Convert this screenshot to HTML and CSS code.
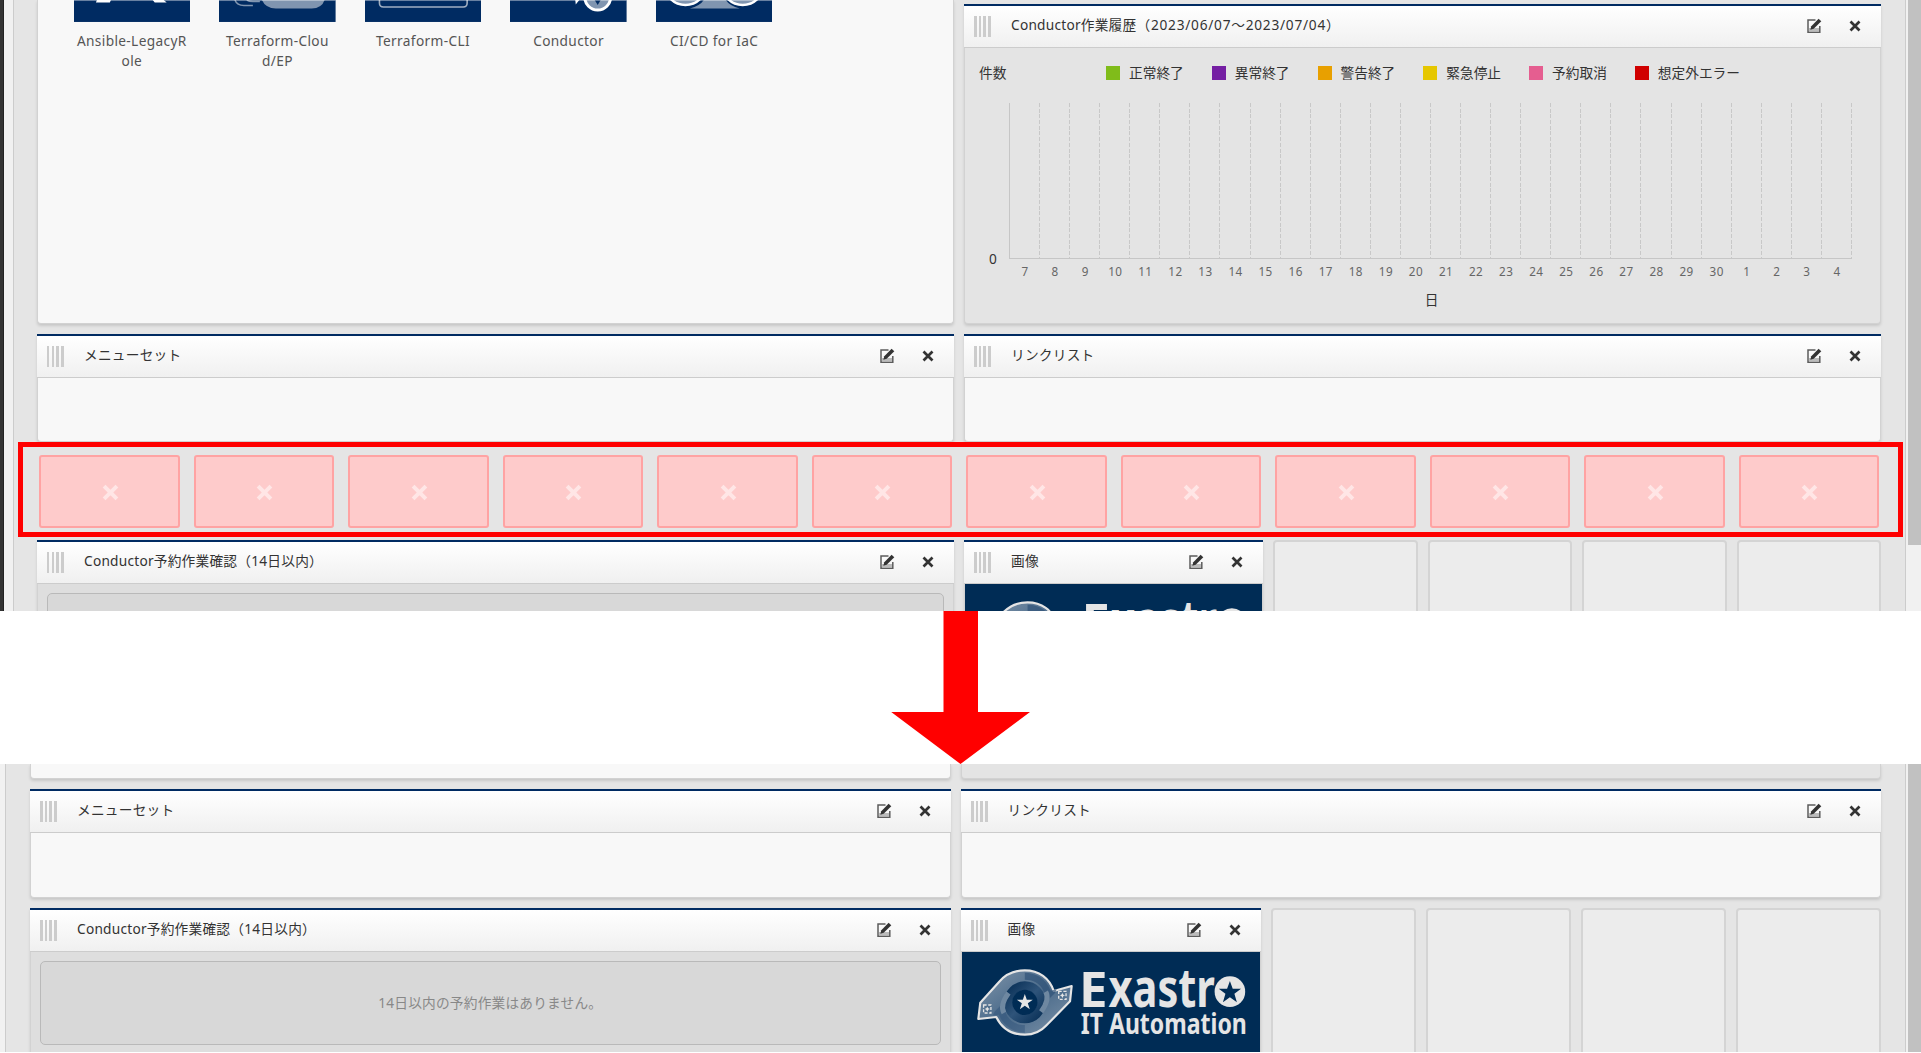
FILE: index.html
```html
<!DOCTYPE html>
<html lang="ja">
<head>
<meta charset="utf-8">
<title>Dashboard</title>
<link rel="stylesheet" href="styles.css">
</head>
<body>
<svg width="0" height="0" class="defs" aria-hidden="true">
  <defs>
    <linearGradient id="band" x1="0" y1="0" x2="1" y2="1">
      <stop offset="0" stop-color="#8196ab"/><stop offset=".5" stop-color="#4a6a8a"/><stop offset="1" stop-color="#7e94aa"/>
    </linearGradient>
    <linearGradient id="ring" x1="0" y1="0" x2="1" y2="1">
      <stop offset="0" stop-color="#0a3158"/><stop offset=".5" stop-color="#2f547a"/><stop offset="1" stop-color="#0a3158"/>
    </linearGradient>
    <symbol id="edit" viewBox="0 0 16 16">
      <path d="M9.5 2H2v12.2h11.8V8" fill="none" stroke="#5c5c5c" stroke-width="1.5"/>
      <path d="M3 10h10v3.5H3z" fill="#bbb"/>
      <path d="M4.3 11.8l1-3.6L12.6.8l2.7 2.5-7.6 7.4z" fill="#333"/>
    </symbol>
    <symbol id="close" viewBox="0 0 12 12">
      <path d="M1.5 1.5l9 9M10.500 1.5l-9 9" stroke="#333" stroke-width="2.7" fill="none"/>
    </symbol>
    <symbol id="cross" viewBox="0 0 18 18">
      <path d="M2.200 2.200l13.600 13.600M15.800 2.200L2.200 15.800" stroke="#ffe6e6" stroke-width="4.200" fill="none"/>
    </symbol>
    <symbol id="logo" viewBox="33 36 897 300" preserveAspectRatio="none">
      <rect x="33" y="36" width="897" height="300" fill="#002c55"/>
      <path d="M88 188L145 125Q175 91 222 91C265 91 296 115 309 153L363 138L358 184L288 255Q262 284 222 284C180 284 151 262 136 231L82 237Z" fill="url(#band)" stroke="#e5e5e5" stroke-width="6.500" stroke-linejoin="round"/>
      <path d="M222 119C270 119 294 160 276 196L312 160L318 148L300 152C284 112 252 98 222 98Z" fill="#2c5077" opacity=".65"/>
      <path d="M222 255C174 255 150 214 168 178L132 214L126 226L144 224C160 262 192 278 222 278Z" fill="#2c5077" opacity=".45"/>
      <circle cx="222" cy="187" r="50" fill="none" stroke="url(#ring)" stroke-width="26"/>
      <path d="M271 215Q298 178 285 155" fill="none" stroke="#6f88a1" stroke-width="15"/>
      <path d="M173 159Q146 196 159 219" fill="none" stroke="#6f88a1" stroke-width="15"/>
      <circle cx="222" cy="187" r="38" fill="#002c55"/>
      <path d="M222 162l6 17h18l-15 11 6 18-15-11-15 11 6-18-15-11h18z" fill="#e5e5e5"/>
      <path d="M98 195h22v24H98zM324 154h22v24h-22z" fill="#52718f" stroke="#e5e5e5" stroke-width="4" stroke-dasharray="9 5"/>
      <path d="M109 200l3 5 5 2-5 2-3 6-3-6-5-2 5-2zM335 159l3 5 5 2-5 2-3 6-3-6-5-2 5-2z" fill="#e5e5e5"/>
      <text x="385" y="200" class="logo-name" textLength="86" lengthAdjust="spacingAndGlyphs">E</text>
      <text x="474" y="200" class="logo-name small" textLength="320" lengthAdjust="spacingAndGlyphs">xastr</text>
      <text x="390" y="283" class="logo-sub" textLength="500" lengthAdjust="spacingAndGlyphs">IT Automation</text>
      <circle cx="839" cy="155" r="46" fill="#e5e5e5"/>
      <path d="M839 123l8.500 23h25l-20 15.500 7.500 25-21-15-21 15 7.500-25-20-15.500h25z" fill="#002c55"/>
    </symbol>
  </defs>
</svg>

<section class="screen before">
  <div class="side-dark"></div>
  <div class="side-light"></div>
  <main class="board">
    <article class="card menu-card">
      <ul class="menus">
        <li><svg viewBox="0 0 117 22" class="tile"><rect width="117" height="22" fill="#002b62"/><path d="M23 0h14l-1 2.500H22zM79 0h11l3 2.500H81z" fill="#fff"/><path d="M0 .5h117" stroke="#fff" opacity=".4"/></svg><span>Ansible-LegacyR<br>ole</span></li>
        <li><svg viewBox="0 0 117 22" class="tile"><rect width="117" height="22" fill="#002b62"/><path d="M16 0q2 5.500 9 5.500h9M28 0q2 1.500 6 1.500h7" stroke="#8095b0" stroke-width="1.500" fill="none"/><path d="M43 0q4 8.500 14 8.500h36Q103 8.500 106 0z" fill="#8095b0"/><path d="M0 .5h117" stroke="#fff" opacity=".4"/></svg><span>Terraform-Clou<br>d/EP</span></li>
        <li><svg viewBox="0 0 117 22" class="tile"><rect width="117" height="22" fill="#002b62"/><path d="M14.500 0v3q0 4 4 4h80q4 0 4-4V0" stroke="#a0afc2" stroke-width="1.600" fill="none"/><path d="M0 .5h117" stroke="#fff" opacity=".4"/></svg><span>Terraform-CLI</span></li>
        <li><svg viewBox="0 0 117 22" class="tile"><rect width="117" height="22" fill="#002b62"/><circle cx="88" cy="-3" r="13" fill="#8095b0" stroke="#fff" stroke-width="3"/><path d="M85 0l3 5 3-5z" fill="#002b62"/><path d="M65.500 0h4l-3.500 4.500z" fill="#fff"/><path d="M0 .5h117" stroke="#fff" opacity=".4"/></svg><span>Conductor</span></li>
        <li><svg viewBox="0 0 117 22" class="tile"><rect width="117" height="22" fill="#002b62"/><path d="M48 0h22q4 6 14 8.500H34Q44 6 48 0z" fill="#8095b0"/><circle cx="29.500" cy="-16" r="21" fill="#8095b0" stroke="#fff" stroke-width="2.500"/><circle cx="87" cy="-16" r="21" fill="#8095b0" stroke="#fff" stroke-width="2.500"/><path d="M0 .5h117" stroke="#fff" opacity=".4"/></svg><span>CI/CD for IaC</span></li>
      </ul>
    </article>
    <article class="card chart-card">
      <header class="bar"><i class="grip"></i><h2>Conductor作業履歴<span class="period">（2023/06/07～2023/07/04）</span></h2><svg class="edit"><use href="#edit"/></svg><svg class="close"><use href="#close"/></svg></header>
      <div class="chart">
        <div class="legend"><span class="unit">件数</span>
          <span class="key green">正常終了</span><span class="key purple">異常終了</span><span class="key orange">警告終了</span><span class="key yellow">緊急停止</span><span class="key pink">予約取消</span><span class="key red">想定外エラー</span>
        </div>
        <div class="plot-row"><span class="zero">0</span><div class="plot"><i></i><i></i><i></i><i></i><i></i><i></i><i></i><i></i><i></i><i></i><i></i><i></i><i></i><i></i><i></i><i></i><i></i><i></i><i></i><i></i><i></i><i></i><i></i><i></i><i></i><i></i><i></i><i></i></div></div>
        <div class="days"><span>7</span><span>8</span><span>9</span><span>10</span><span>11</span><span>12</span><span>13</span><span>14</span><span>15</span><span>16</span><span>17</span><span>18</span><span>19</span><span>20</span><span>21</span><span>22</span><span>23</span><span>24</span><span>25</span><span>26</span><span>27</span><span>28</span><span>29</span><span>30</span><span>1</span><span>2</span><span>3</span><span>4</span></div>
        <div class="axis-name">日</div>
      </div>
    </article>

    <article class="card half"><header class="bar"><i class="grip"></i><h2>メニューセット</h2><svg class="edit"><use href="#edit"/></svg><svg class="close"><use href="#close"/></svg></header></article>
    <article class="card half"><header class="bar"><i class="grip"></i><h2>リンクリスト</h2><svg class="edit"><use href="#edit"/></svg><svg class="close"><use href="#close"/></svg></header></article>

    <div class="blank"><svg><use href="#cross"/></svg></div><div class="blank"><svg><use href="#cross"/></svg></div><div class="blank"><svg><use href="#cross"/></svg></div><div class="blank"><svg><use href="#cross"/></svg></div><div class="blank"><svg><use href="#cross"/></svg></div><div class="blank"><svg><use href="#cross"/></svg></div><div class="blank"><svg><use href="#cross"/></svg></div><div class="blank"><svg><use href="#cross"/></svg></div><div class="blank"><svg><use href="#cross"/></svg></div><div class="blank"><svg><use href="#cross"/></svg></div><div class="blank"><svg><use href="#cross"/></svg></div><div class="blank"><svg><use href="#cross"/></svg></div>

    <article class="card half reserve"><header class="bar"><i class="grip"></i><h2>Conductor予約作業確認（14日以内）</h2><svg class="edit"><use href="#edit"/></svg><svg class="close"><use href="#close"/></svg></header><div class="notice"></div></article>
    <article class="card image-card"><header class="bar"><i class="grip"></i><h2>画像</h2><svg class="edit"><use href="#edit"/></svg><svg class="close"><use href="#close"/></svg></header><svg class="logo"><use href="#logo"/></svg></article>
    <div class="slot"></div><div class="slot"></div><div class="slot"></div><div class="slot"></div>
  </main>
  <div class="scroll"><div class="thumb"></div></div>
  <div class="highlight"></div>
</section>

<div class="between"><svg class="arrow" viewBox="0 0 140 153"><path d="M52.500 0h34.500v101H139L69.500 153 .2 101h52.300z" fill="#f00"/></svg></div>

<section class="screen after">
  <div class="side-light"></div>
  <main class="board">
    <article class="card half tail"></article>
    <article class="card half tail gray"></article>
    <article class="card half"><header class="bar"><i class="grip"></i><h2>メニューセット</h2><svg class="edit"><use href="#edit"/></svg><svg class="close"><use href="#close"/></svg></header></article>
    <article class="card half"><header class="bar"><i class="grip"></i><h2>リンクリスト</h2><svg class="edit"><use href="#edit"/></svg><svg class="close"><use href="#close"/></svg></header></article>
    <article class="card half reserve"><header class="bar"><i class="grip"></i><h2>Conductor予約作業確認（14日以内）</h2><svg class="edit"><use href="#edit"/></svg><svg class="close"><use href="#close"/></svg></header><div class="notice">14日以内の予約作業はありません。</div></article>
    <article class="card image-card"><header class="bar"><i class="grip"></i><h2>画像</h2><svg class="edit"><use href="#edit"/></svg><svg class="close"><use href="#close"/></svg></header><svg class="logo"><use href="#logo"/></svg></article>
    <div class="slot"></div><div class="slot"></div><div class="slot"></div><div class="slot"></div>
  </main>
  <div class="scroll"><div class="thumb"></div></div>
</section>
</body>
</html>
```
FILE: styles.css
```css
* { box-sizing: border-box; }
body {
  margin: 0;
  width: 1921px;
  height: 1053px;
  overflow: hidden;
  background: #fff;
  font: 13.7px/20.5px "Noto Sans", "Noto Sans CJK JP", sans-serif;
  color: #333;
}
.defs { display: block; }
.screen { display: flex; position: relative; overflow: hidden; background: #e5e5e5; }
.before { height: 611px; }
.after { height: 288px; }
.side-dark { width: 4px; background: linear-gradient(90deg, #333 3px, #222 3px); }
.side-light { width: 9px; background: #f1f1f1; }
.after .side-light { width: 5px; }

.board {
  flex: 1;
  display: grid;
  grid-template-columns: repeat(12, minmax(0, 1fr));
  grid-template-rows: 324px 108px 78px 180px;
  gap: 10px;
  padding: 0 24px 0 23px;
  border: solid #ccc;
  border-width: 0 1px;
}
.after .board { grid-template-rows: 15px 109px 180px; padding-right: 24px; padding-left: 24px; }

.card {
  grid-column: span 6;
  background: #f8f8f8;
  border: 1px solid #d2d2d2;
  border-top: 0;
  border-radius: 0 0 4px 4px;
  box-shadow: 0 2px 3px rgba(0, 0, 0, .13);
}
.gray { background: #e4e4e4; }
.bar {
  display: flex;
  align-items: center;
  height: 44px;
  margin: 0 -1px;
  padding: 0 20px 1px 10px;
  border-top: 2.500px solid #002b62;
  border-bottom: 1px solid #ccc;
  background: linear-gradient(#fff, #f0f0f0);
}
.grip {
  width: 17px;
  height: 21px;
  margin-right: 20px;
  background: repeating-linear-gradient(90deg, #ccc 0 2.500px, transparent 2.500px 4.670px);
}
h2 { flex: 1; margin: -2px 0 0; font-size: 13.7px; font-weight: 400; line-height: 20px; letter-spacing: .23px; white-space: nowrap; }
.period { letter-spacing: .75px; }
.edit { width: 16px; height: 16px; margin-right: 27px; }
.close { width: 12px; height: 12px; }

.menu-card { overflow: hidden; }
.menus { display: flex; gap: 29px; margin: 0; padding: 0 0 0 35.500px; list-style: none; }
.menus li { width: 116.600px; text-align: center; color: #555; }
.menus span { display: block; margin-top: 8.500px; letter-spacing: .35px; white-space: nowrap; }
.tile { display: block; width: 116.600px; height: 22px; }

.chart-card { margin-top: 4px; background: #e4e4e4; }
.chart { padding: 15px 28px 0 14px; }
.legend { display: flex; align-items: center; height: 20px; }
.unit { width: 127px; }
.key { display: flex; align-items: center; margin-right: 28px; white-space: nowrap; }
.key::before { content: ""; width: 14px; height: 14px; margin-right: 9px; }
.green::before { background: #80bc1a; }
.purple::before { background: #751fa3; }
.orange::before { background: #e8a000; }
.yellow::before { background: #e6c700; }
.pink::before { background: #e55e90; }
.red::before { background: #d00000; }
.plot-row { display: flex; align-items: flex-end; margin-top: 20px; }
.zero { width: 31px; padding-left: 13px; line-height: 20px; margin: 0 0 -10px -1px; text-indent: -2px; }
.plot { flex: 1; height: 156px; display: grid; grid-template-columns: repeat(28, 1fr); border-left: 1px solid #c6c6c6; border-bottom: 1px solid #c6c6c6; }
.plot i { background: repeating-linear-gradient(#c8c8c8 0 4px, transparent 4px 5.700px) right / 1px 100% no-repeat; }
.days { display: grid; grid-template-columns: repeat(28, 1fr); margin: 2px 0 0 31px; text-align: center; font-size: 11.700px; letter-spacing: .4px; color: #666; }
.axis-name { margin: 8px 0 0 32px; text-align: center; }

.blank {
  display: grid;
  place-items: center;
  margin: 3px 2px 2px 2px;
  border: 2px solid #ffa3a3;
  border-radius: 3px;
  background: #fecbcb;
}
.blank svg { width: 17px; height: 17px; margin: 2px 0 0 2px; }
.slot { border: 2px solid #d4d4d4; border-radius: 4px; background: #ececec; }
.reserve { background: #dedede; }
.notice {
  display: grid;
  place-items: center;
  height: 84px;
  margin: 9px;
  border: 1px solid #b9b9b9;
  border-radius: 5px;
  background: #d8d8d8;
  color: #888;
  letter-spacing: .2px;
}
.image-card { grid-column: span 2; }
.logo { display: block; width: 100%; height: 100px; }
.logo-name { font: 700 143px "Noto Sans", sans-serif; fill: #e5e5e5; }
.small { font-size: 160px; }
.logo-sub { font: 700 83px "Noto Sans", sans-serif; fill: #e5e5e5; }

.scroll { width: 15px; padding-left: 2px; background: #f1f1f1; }
.thumb { height: 545px; background: #c1c1c1; }
.highlight { position: absolute; left: 18px; top: 442px; width: 1885px; height: 95px; border: 5px solid #f00; }

.between { height: 153px; display: flex; justify-content: center; }
.arrow { width: 140px; height: 153px; display: block; }
```
